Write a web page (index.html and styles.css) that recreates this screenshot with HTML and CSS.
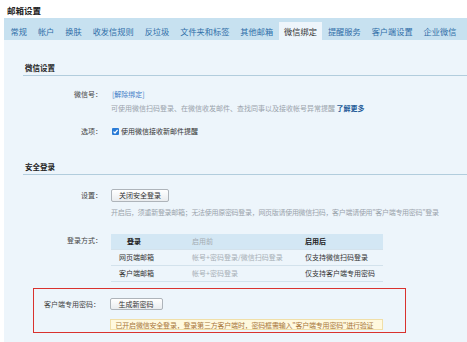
FILE: index.html
```html
<!DOCTYPE html>
<html lang="zh-CN">
<head>
<meta charset="utf-8">
<title>邮箱设置</title>
<link rel="stylesheet" href="styles.css">
</head>
<body>
<div class="page">
  <div class="title">邮箱设置</div>
  <nav class="tabs">
    <span class="tab">常规</span>
    <span class="tab">帐户</span>
    <span class="tab">换肤</span>
    <span class="tab">收发信规则</span>
    <span class="tab">反垃圾</span>
    <span class="tab">文件夹和标签</span>
    <span class="tab">其他邮箱</span>
    <span class="tab active">微信绑定</span>
    <span class="tab">提醒服务</span>
    <span class="tab">客户端设置</span>
    <span class="tab">企业微信</span>
  </nav>
  <div class="content">
    <section class="sec sec-first">
      <h2 class="sec-head">微信设置</h2>
      <div class="row row-wxid">
        <span class="label">微信号：</span>
        <div class="val">
          <a class="link">[解除绑定]</a>
          <p class="desc">可使用微信扫码登录、在微信收发邮件、查找同事以及接收帐号异常提醒 <a class="more">了解更多</a></p>
        </div>
      </div>
      <div class="row row-opt">
        <span class="label">选项：</span>
        <div class="val check">
          <svg class="cb" width="7" height="7" viewBox="0 0 7 7"><rect x="0" y="0" width="7" height="7" rx="1" fill="#2a7bd6"/><polyline points="1.5,3.6 3,5 5.6,1.8" fill="none" stroke="#fff" stroke-width="1.2"/></svg>
          <span>使用微信接收新邮件提醒</span>
        </div>
      </div>
    </section>
    <section class="sec sec-second">
      <h2 class="sec-head">安全登录</h2>
      <div class="row row-set">
        <span class="label">设置：</span>
        <div class="val">
          <button class="btn">关闭安全登录</button>
          <p class="desc desc-set">开启后，须重新登录邮箱；无法使用原密码登录，网页版请使用微信扫码，客户端请使用"客户端专用密码"登录</p>
        </div>
      </div>
      <div class="row row-mode">
        <span class="label label-mode">登录方式：</span>
        <div class="val">
          <table class="modes">
            <thead>
              <tr><th class="c1">登录</th><th class="c2">启用前</th><th class="c3">启用后</th></tr>
            </thead>
            <tbody>
              <tr><td class="c1">网页端邮箱</td><td class="c2">帐号+密码登录/微信扫码登录</td><td class="c3">仅支持微信扫码登录</td></tr>
              <tr><td class="c1">客户端邮箱</td><td class="c2">帐号+密码登录</td><td class="c3">仅支持客户端专用密码</td></tr>
            </tbody>
          </table>
        </div>
      </div>
      <div class="redbox">
        <div class="row row-pwd">
          <span class="label">客户端专用密码：</span>
          <div class="val">
            <button class="btn btn-pwd">生成新密码</button>
            <div class="notice">已开启微信安全登录，登录第三方客户端时，密码框需输入"客户端专用密码"进行验证</div>
          </div>
        </div>
      </div>
    </section>
  </div>
</div>
</body>
</html>
```

FILE: styles.css
```css
* { box-sizing: border-box; }
html, body { margin: 0; padding: 0; background: #fff; }
body {
  font-family: "Noto Sans CJK SC", "Noto Sans", sans-serif;
  font-size: 7px;
  color: #333;
  width: 467px;
  height: 342px;
  overflow: hidden;
}
.page { display: flex; flex-direction: column; height: 342px; }

.title {
  height: 18px;
  padding: 4px 0 0 7px;
  font-size: 8.5px;
  line-height: 12px;
  font-weight: bold;
  color: #222;
}

.tabs {
  margin-left: 4px;
  height: 22px;
  background: #c7e1f0;
  display: flex;
  align-items: flex-end;
  padding-left: 1px;
}
.tab {
  height: 18px;
  line-height: 18px;
  padding: 0 5.5px;
  font-size: 8.2px;
  color: #2f6ea8;
  white-space: nowrap;
}
.tab.active {
  background: #eef5fb;
  color: #333;
}

.content {
  margin-left: 4px;
  flex: 1;
  background: #edf5fb;
  padding-top: 20px;
}

.sec { margin-left: 19px; }
.sec-second { margin-top: 21px; }
.sec-head {
  margin: 0;
  height: 16px;
  line-height: 15px;
  padding-left: 2px;
  font-size: 7.5px;
  font-weight: bold;
  color: #222;
  border-bottom: 1px solid #b2cddd;
}

.row {
  display: grid;
  grid-template-columns: 79px 1fr;
  column-gap: 9px;
  line-height: 14px;
}
.label {
  text-align: right;
  color: #444;
  white-space: nowrap;
}
.val { min-width: 0; }
.desc {
  margin: 0;
  color: #9aa3ab;
  white-space: nowrap;
}
.link { color: #3d7cc6; margin-left: 1px; }
.more { color: #245b98; font-weight: bold; }

.row-wxid { margin-top: 11px; }
.row-opt { margin-top: 9px; }
.check { display: flex; align-items: center; gap: 2px; padding-left: 1px; color: #333; }
.cb { flex: none; }

.row-set { margin-top: 13px; }
.btn {
  display: block;
  height: 13px;
  margin: 0.5px 0;
  padding: 0 7px;
  font-family: inherit;
  font-size: 7px;
  line-height: 11px;
  color: #333;
  background: linear-gradient(#ffffff, #e9ecef);
  border: 1px solid #aeb4ba;
  border-radius: 2px;
}
.desc-set { margin-top: 3px; letter-spacing: -0.3px; }

.row-mode { margin-top: 15px; }
.label-mode { line-height: 12px; }
.modes {
  width: 272px;
  border-collapse: collapse;
  table-layout: fixed;
  line-height: 15px;
}
.modes th, .modes td {
  padding: 0 0 0 8px;
  text-align: left;
  white-space: nowrap;
  overflow: hidden;
  border-bottom: 1px solid #d3e2ec;
}
.modes th { background: #d3e7f4; height: 16px; }
.modes td { height: 16px; }
.modes .c1 { width: 73px; }
.modes .c2 { width: 113px; }
.modes .c3 { width: 86px; }
.modes th.c1 { padding-left: 16px; color: #222; }
.modes th.c2 { font-weight: normal; color: #a3abb2; }
.modes th.c3 { color: #222; }
.modes td.c2 { color: #a7afb6; }
.modes td.c1, .modes td.c3 { color: #333; }

.redbox {
  margin: 6px 0 0 10px;
  width: 373px;
  border: 1.5px solid #d9322e;
  padding: 8.5px 0 2.5px;
}
.row-pwd {
  grid-template-columns: 66px 1fr;
  column-gap: 9.5px;
  line-height: 12px;
}
.btn-pwd { height: 12px; margin: 0; padding: 0 8px; line-height: 10px; }
.notice {
  margin-top: 9px;
  width: 273px;
  height: 11px;
  line-height: 10px;
  padding-left: 5px;
  background: #fff9df;
  border: 0.5px solid #f0dfa8;
  color: #a8763a;
  white-space: nowrap;
  overflow: hidden;
  letter-spacing: -0.2px;
}
```
